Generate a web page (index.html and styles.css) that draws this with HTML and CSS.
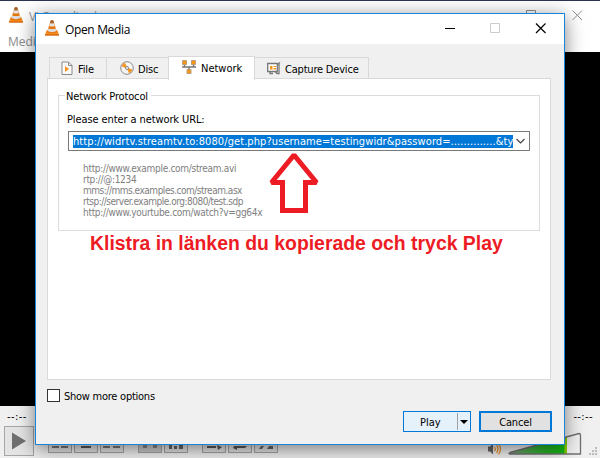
FILE: index.html
```html
<!DOCTYPE html>
<html lang="sv">
<head>
<meta charset="utf-8">
<title>Open Media</title>
<link rel="stylesheet" href="styles.css">
</head>
<body>
<svg class="defs" width="0" height="0">
  <symbol id="cone" viewBox="0 0 14 16">
    <path d="M1.400 10.500h11.200L14 15H0z" fill="#f58a1c"/>
    <path d="M0 14.300h14v1.400H0z" fill="#d9660a"/>
    <path d="M5.800.3h2.400L12 12Q7 14.600 2 12z" fill="#e8740c"/>
    <path d="M5 3.200h4l.9 2.700Q7 7 4.100 5.900z" fill="#e3e3e3"/>
    <path d="M3.300 8.400Q7 9.800 10.700 8.400l.9 2.700Q7 13.400 2.400 11.100z" fill="#dcdcdc"/>
    <path d="M5.900.3h2.200l.9 2.900H5z" fill="#9a6434"/>
  </symbol>
</svg>
<div class="player">
  <header class="player-title">
    <svg class="cone"><use href="#cone"/></svg>
    <span class="player-name">VLC media player</span>
    <svg class="player-ctl" width="57" height="11"><path d="M.5.5h9v9h-9zM46.500.5l9.500 9.500m0-9.500l-9.500 9.500" fill="none" stroke="#8f8f8f"/></svg>
  </header>
  <nav class="player-menu">Media</nav>
  <main class="video"></main>
  <footer class="player-bar">
    <div class="times"><span>--:--</span><span>--:--</span></div>
    <div class="controls">
      <div class="btn big"><svg width="30" height="30"><path d="M8 6.500v17l14-8.500z" fill="#707070"/></svg></div>
      <div class="btn g1"><svg width="22" height="24"><path d="M3 18h7v2H3zm9 0h7v2h-7z" fill="#777"/></svg></div>
      <div class="btn"><svg width="22" height="24"><path d="M6 18h10v2H6z" fill="#555"/></svg></div>
      <div class="btn"><svg width="22" height="24"><path d="M2 18h7v2H2zm10 0h7v2h-7z" fill="#777"/></svg></div>
      <div class="btn g2 dim"><svg width="22" height="24"><path d="M4 16h4v4H4zm10 0h4v4h-4z" fill="#888"/></svg></div>
      <div class="btn"><svg width="22" height="24"><path d="M4 16h3v5H4zm5 2h3v3H9zm5-2h4v5h-4z" fill="#666"/></svg></div>
      <div class="btn g3"><svg width="22" height="24"><path d="M4 18h9v2H4zm10-1l5 2-4 3z" fill="#555"/></svg></div>
      <div class="btn"><svg width="22" height="24"><path d="M5 18h13l-2 2H8v2l-4-2z" fill="#555"/></svg></div>
      <div class="btn"><svg width="22" height="24"><path d="M6 18h3l-2 3H4zm8 0h4v3h-6z" fill="#666"/></svg></div>
      <svg class="speaker" width="16" height="14"><path d="M1 4.500h2L6 1.500v11L3 9.500H1z" fill="#666"/><path d="M7.500 5q1.500 2 0 4m2-6q3 4 0 8m2-9.500q4 5.500 0 11" fill="none" stroke="#f08a1c" stroke-width="1.200"/></svg>
      <svg class="volume" width="75" height="24"><defs><linearGradient id="vg"><stop offset="0" stop-color="#7a9a7a"/><stop offset=".5" stop-color="#32b432"/><stop offset=".95" stop-color="#10b810"/><stop offset=".96" stop-color="#8acb00"/></linearGradient></defs><path d="M2 20.500L59 5v17H2z" fill="url(#vg)"/><path d="M2 20.500L71 1.500q1.500 0 1.500 1.500v19H2q-2-.5 0-1.500z" fill="none" stroke="#707070" stroke-width="1.300"/></svg>
      <svg class="grip" width="9" height="9"><path d="M6 0h2v2H6zM3 3h2v2H3zm3 0h2v2H6zM0 6h2v2H0zm3 0h2v2H3zm3 0h2v2H6z" fill="#bbb"/></svg>
    </div>
  </footer>
</div>

<section class="dialog">
  <header class="dialog-title">
    <svg class="cone"><use href="#cone"/></svg>
    <h1>Open Media</h1>
    <svg class="dialog-ctl" width="102" height="11"><path d="M0 5.500h10" stroke="#000"/><path d="M45.500.5h9v9h-9z" fill="none" stroke="#ccc"/><path d="M91 .5l9.500 9.500m0-9.500L91 10" stroke="#000" stroke-width="1.200"/></svg>
  </header>
  <div class="dialog-body">
    <div class="tabs">
      <div class="tab file"><svg width="12" height="15"><path d="M1 1h6.500L11 4.500V13.500H1z" fill="#fafafa" stroke="#8a8a8a"/><path d="M7.500 1v3.500H11" fill="none" stroke="#8a8a8a"/><path d="M4 5l4 3-4 3z" fill="#f7941d"/></svg><span>File</span></div>
      <div class="tab disc"><svg width="14" height="14"><circle cx="7" cy="7" r="6.300" fill="#f6f6f6" stroke="#888"/><path d="M7 7L2 5l2.500-3zm0 0l5 2-2.500 3z" fill="#f7941d" stroke="#f7941d"/><circle cx="7" cy="7" r="1.500" fill="#fff" stroke="#888"/></svg><span>Disc</span></div>
      <div class="tab network active"><svg width="14" height="14"><path d="M.5.5h4v4h-4zm9 0h4v4h-4zm-4.500 9h4v4H5z" fill="#ff9212" stroke="#b3a07f"/><path d="M0 7h14M2.500 5v2m9-2v2M7 7v2" stroke="#777" stroke-width="1.500"/></svg><span>Network</span></div>
      <div class="tab capture"><svg width="14" height="13"><path d="M.7 1.500h9.600v8H.7zM10 3l3-2.500M12 2v9.500h-2l-2-2M3 9.500v2h3" fill="#fff" stroke="#777" stroke-width="1.300"/><path d="M3 4h2.500v3.500H3zm3.500 0H9v1H6.500zm0 2H9v1.500H6.500z" fill="#f7941d"/></svg><span>Capture Device</span></div>
    </div>
    <div class="pane">
      <fieldset class="group">
        <legend>Network Protocol</legend>
        <label class="prompt">Please enter a network URL:</label>
        <div class="combo"><div class="sel"><span>http://widrtv.streamtv.to:8080/get.php?username=testingwidr&amp;password=..............&amp;ty</span></div><svg width="9" height="6"><path d="M.5 1l4 4 4-4" fill="none" stroke="#444" stroke-width="1.200"/></svg></div>
        <div class="hints">
          <p>http://www.example.com/stream.avi</p>
          <p>rtp://@:1234</p>
          <p class="tight">mms://mms.examples.com/stream.asx</p>
          <p class="tight">rtsp://server.example.org:8080/test.sdp</p>
          <p>http://www.yourtube.com/watch?v=gg64x</p>
        </div>
      </fieldset>
      <p class="note"><span>Klistra in länken du kopierade och tryck Play</span></p>
    </div>
    <label class="more"><i class="box"></i><span>Show more options</span></label>
    <div class="actions">
      <div class="play"><span>Play</span><i class="drop"></i></div>
      <div class="cancel"><span>Cancel</span></div>
    </div>
  </div>
</section>
<svg class="arrow" width="52" height="64" viewBox="0 0 52 64"><path d="M26 4L48.500 31.500H37.500V59.500H14.500V31.500H3.500z" fill="#fff" stroke="#ed1c24" stroke-width="5" stroke-linejoin="miter" stroke-miterlimit="1.500"/></svg>
</body>
</html>
```

FILE: styles.css
```css
* { box-sizing: border-box; margin: 0; padding: 0; }
body { width: 600px; height: 458px; overflow: hidden; position: relative; font: 11px/13px "DejaVu Sans Condensed", "DejaVu Sans", sans-serif; font-stretch: condensed; color: #000; }
span { white-space: nowrap; }
svg { display: block; flex: none; }
.defs { position: absolute; }
.cone { width: 14px; height: 16px; }

.player { width: 600px; height: 458px; display: flex; flex-direction: column; background: #fff; border-top: 1px solid #2b3550; }
.player-title { height: 28px; display: flex; align-items: center; padding: 0 17px 0 9px; gap: 6px; color: #999; font: 12px/16px "Open Sans", sans-serif; }
.player-name { margin-top: 3px; letter-spacing: -.4px; }
.player-ctl { margin-left: auto; }
.player-menu { height: 23px; padding: 5px 8px; color: #8c8c8c; font: 12px/16px "Open Sans", sans-serif; }
.video { height: 354px; background: #000; }
.player-bar { height: 52px; background: #f0f0f0; }
.times { height: 20px; padding: 4px 7px; display: flex; justify-content: space-between; letter-spacing: .4px; }
.controls { display: flex; align-items: flex-start; height: 32px; padding-left: 4px; }
.btn { width: 24px; height: 26px; margin-right: 2px; margin-top: 1px; border: 1px solid #a5a5a5; background: #e4e4e4; }
.big { width: 30px; height: 30px; margin-top: 0; }
.big svg { margin: -1px; }
.g1, .g2, .g3 { margin-left: 12px; }
.dim { background: #ccc; }
.speaker { margin: 16px 0 0 auto; }
.volume { margin: 6px 0 0 5px; }
.grip { margin: 21px 2px 0 6px; }

.dialog { position: absolute; left: 35px; top: 13px; width: 530px; height: 432px; border: 1px solid #1883d7; background: #f0f0f0; box-shadow: 0 4px 18px rgba(0,0,0,.5); }
.dialog-title { height: 30px; background: #fff; display: flex; align-items: center; padding: 0 17px 2px 9px; }
.dialog-title h1 { font: 12px/16px "Open Sans", sans-serif; margin: 3px 0 0 6px; letter-spacing: -.35px; }
.dialog-ctl { margin-left: auto; }
.dialog-body { padding: 11px 12px 0 11px; }
.tabs { display: flex; align-items: flex-end; height: 24px; padding-left: 2px; }
.tab { height: 22px; border: 1px solid #d9d9d9; border-bottom: 0; border-left: 0; display: flex; align-items: center; gap: 5px; padding: 0 0 1px 11px; letter-spacing: -.15px; }
.tab span { margin-top: 2px; }
.file { width: 58px; border-left: 1px solid #d9d9d9; }
.disc { width: 62px; padding-left: 13px; gap: 4px; }
.network { width: 87px; padding: 0 0 3px 13px; letter-spacing: 0; }
.capture { width: 114px; padding-left: 12px; gap: 4px; letter-spacing: -.2px; }
.active { height: 24px; background: #fff; margin-bottom: -1px; position: relative; border-left: 1px solid #d9d9d9; margin-left: -1px; }
.pane { border: 1px solid #d9d9d9; background: #fff; width: 504px; height: 302px; margin-top: -1px; padding: 9px 10px; }
.group { border: 1px solid #dcdcdc; height: 143px; padding: 0 9px; min-width: 0; }
legend { margin-left: -3px; padding: 0 3px 0 1px; height: 15px; line-height: 17px; letter-spacing: -.15px; }
.prompt { display: block; margin: 10px 0 0 -1px; height: 18px; letter-spacing: -.1px; }
.combo { width: 462px; height: 20px; border: 1px solid #7a7a7a; display: flex; align-items: center; padding: 0 4px; justify-content: space-between; }
.sel { width: 440px; height: 13px; background: #0078d7; color: #fff; overflow: hidden; letter-spacing: .085px; }
.hints { margin: 12px 0 0 15px; color: #808080; font-size: 10px; line-height: 11px; letter-spacing: -.3px; }
.tight { letter-spacing: -.48px; }
.note { color: #ed1c24; font: bold 19.4px/22px "Liberation Sans", sans-serif; margin: 1px 0 0 32px; }
.more { display: flex; align-items: center; gap: 4px; margin-top: 9px; height: 13px; letter-spacing: -.25px; }
.more span { margin-top: 1px; }
.box { width: 13px; height: 13px; border: 1px solid #333; background: #fff; }
.actions { display: flex; justify-content: flex-end; gap: 8px; margin-top: 9px; }
.play { width: 68px; height: 21px; border: 1px solid #0078d7; background: #e5f1fb; display: flex; align-items: center; padding-left: 16px; justify-content: space-between; }
.drop { width: 13px; height: 17px; border-left: 1px solid #a0a0a0; display: flex; align-items: center; justify-content: center; }
.drop::before { content: ""; border: 4px solid transparent; border-top-color: #000; border-bottom: 0; }
.cancel { width: 73px; height: 21px; border: 2px solid #0078d7; background: #e1e1e1; display: flex; align-items: center; justify-content: center; letter-spacing: -.15px; }
.play span, .cancel span { margin-top: 1px; }
.arrow { position: absolute; left: 268px; top: 151px; }
```
